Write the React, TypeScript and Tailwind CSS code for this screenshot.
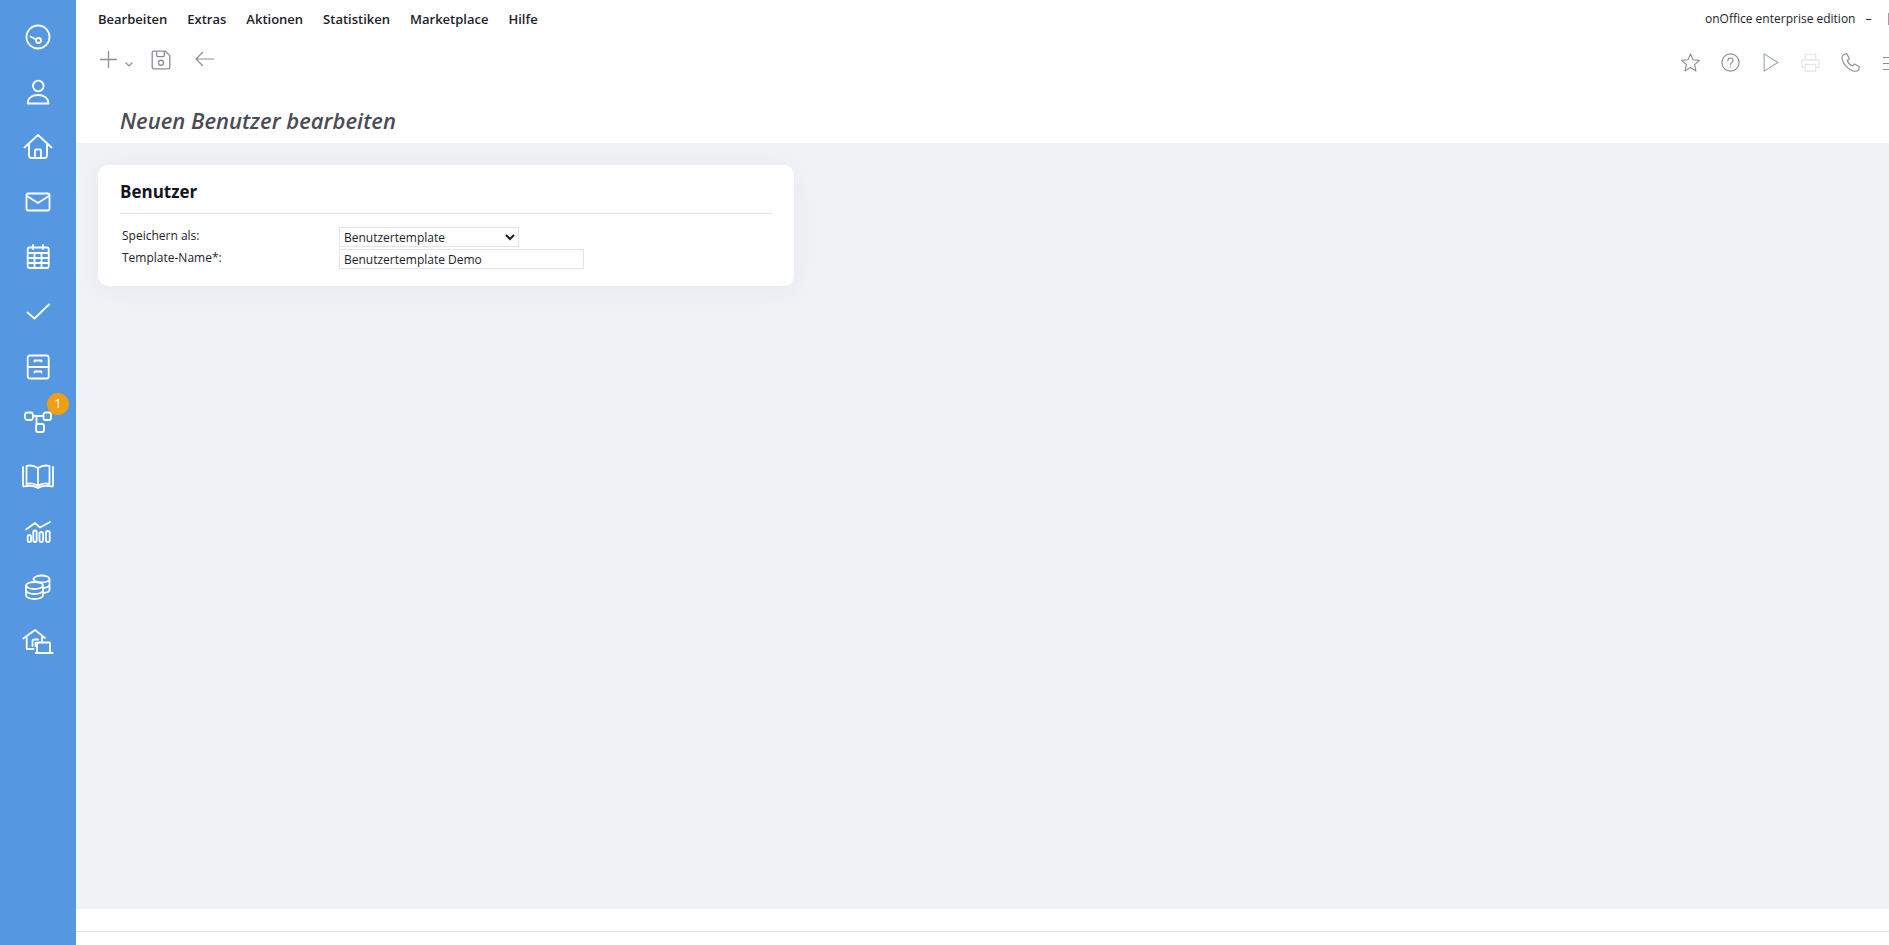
import React from "react";

const MENU = ["Bearbeiten", "Extras", "Aktionen", "Statistiken", "Marketplace", "Hilfe"];

type IconProps = { className?: string; strokeWidth?: number };

function Svg({ className, strokeWidth = 1.5, children }: IconProps & { children: React.ReactNode }) {
  return (
    <svg
      viewBox="0 0 28 28"
      fill="none"
      stroke="currentColor"
      strokeWidth={strokeWidth}
      strokeLinecap="round"
      strokeLinejoin="round"
      className={className}
    >
      {children}
    </svg>
  );
}

const sideIcons: React.ReactNode[] = [
  <>
    <circle cx="14" cy="14" r="11.500" />
    <circle cx="14.500" cy="17.500" r="2.500" />
    <path d="M12.200 16.500 L6.500 13.500" />
  </>,
  <>
    <circle cx="14.300" cy="8" r="5.300" />
    <path d="M3.700 25.500 C3.700 20 8 17 14 17 C20 17 24.500 20 24.500 25.500 Z" />
  </>,
  <>
    <path d="M0.500 14.500 L14 2 L27.500 14.500" />
    <path d="M5 11.500 V22.500 Q5 25 7.500 25 H20.500 Q23 25 23 22.500 V11.500" />
    <path d="M11 25 V17.500 Q11 16.500 12 16.500 H16 Q17 16.500 17 17.500 V25" />
  </>,
  <>
    <rect x="2.500" y="5.500" width="23" height="17" rx="1.500" />
    <path d="M3 8 L14 15 L25 8" />
  </>,
  <>
    <rect x="3.700" y="4.500" width="21" height="20.500" rx="1.500" />
    <path d="M9 2 V6 M19 2 V6 M3.700 10 H24.700 M3.700 15 H24.700 M3.700 20 H24.700 M10.500 10 V25 M17.500 10 V25" />
  </>,
  <path d="M3.500 14.500 L10.500 20.500 L25 6.500" />,
  <>
    <rect x="3.700" y="2.500" width="21" height="23" rx="2" />
    <path d="M3.700 14 H24.700 M10.500 8.500 V7.500 H17.500 V8.500 M10.500 19.500 V18.500 H17.500 V19.500" />
  </>,
  <>
    <rect x="1" y="4.500" width="8" height="7.500" rx="2.500" />
    <rect x="19.500" y="4.500" width="7.500" height="7.500" rx="2" />
    <rect x="12" y="16" width="8" height="8" rx="2" />
    <path d="M9 8 H19.500 M12.500 8 V16" />
  </>,
  <>
    <path d="M14 5 C10 2.500 6 2 2.500 3 V21 C6 20 10 20 14 23 C18 20 22 20 25.500 21 V3 C22 2 18 2.500 14 5 Z M14 5 V23" />
    <path d="M-1 4 V22.500 Q-1 23.500 0 23.500 C6 22 10 22.500 14 25 C18 22.500 22 22 28 23.500 Q29 23.500 29 22.500 V4" />
  </>,
  <>
    <path d="M2 11.500 L11 5 L16 9.500 L26 4" />
    <rect x="3.700" y="17" width="3.300" height="7" rx="1.600" />
    <rect x="9.300" y="12.500" width="3.400" height="11.500" rx="1.700" />
    <rect x="15.500" y="14" width="3.600" height="10" rx="1.800" />
    <rect x="22" y="13" width="3.700" height="11" rx="1.800" />
  </>,
  <>
    <ellipse cx="10.500" cy="12.500" rx="8.500" ry="3.500" />
    <path d="M2 12.500 V22.500 C2 24.500 6 26 10.500 26 C15 26 19 24.500 19 22.500 V12.500 M2 17.500 C2 19.500 6 21 10.500 21 C15 21 19 19.500 19 17.500" />
    <path d="M9.500 6 C9.500 4 13.500 2.500 17.500 2.500 C22 2.500 25.500 4 25.500 6 V17 C25.500 18.500 23 19.500 19.500 20 M25.500 11.500 C25.500 13 23 14.500 19.500 15 M9.500 6 C9.500 8 13.500 9.500 17.500 9.500 C22 9.500 25.500 8 25.500 6" />
  </>,
  <>
    <path d="M-0.700 10.500 L11 2 L21 10" />
    <path d="M2.700 9 V21 H9.500 M18 8 V13" />
    <path d="M8.500 18 V13.500 Q8.500 11.500 10.500 11.500 H14 M14 15 H11.500 V18" />
    <path d="M13 24.500 V15 Q13 14.500 13.500 14.500 H25.500 Q26 14.500 26 15 V24.500" />
    <path d="M11.700 25 H28.700" />
  </>,
];

const topIcons: React.ReactNode[] = [
  <path key="star" d="M14 2.500 L17.300 10.300 L25.800 11.100 L19.400 16.800 L21.300 25.300 L14 20.800 L6.700 25.300 L8.600 16.800 L2.200 11.100 L10.700 10.300 Z" />,
  <g key="help">
    <circle cx="14" cy="14" r="11.500" />
    <path d="M10.500 11.500 C10.500 9.200 12.200 8 14 8 C16 8 17.500 9.400 17.500 11.200 C17.500 13.800 14 13.800 14 16.800 M14 19.700 V20" />
  </g>,
  <path key="play" d="M5.500 2.500 L24 14 L5.500 25.500 Z" />,
  <g key="print">
    <path d="M7 10.500 V3 H21 V10.500 M7 20.500 H2.500 V12 Q2.500 10.500 4 10.500 H24 Q25.500 10.500 25.500 12 V20.500 H21" />
    <rect x="7" y="16.500" width="14" height="9" />
  </g>,
  <path key="phone" d="M4.500 3.500 L9 2 L12.500 9 L9.800 11.300 C10.800 14.800 13.500 17.500 17 18.500 L19.200 16 L26 19.800 L24.500 24.200 C23 26 20 26 17 25 C11 23 5 17 3.200 11 C2.500 8 2.500 5 4.500 3.500 Z" />,
];

export default function App() {
  return (
    <div
      className="flex h-[945px] w-full overflow-hidden bg-white text-[#1d1d2b]"
      style={{ fontFamily: '"Open Sans", sans-serif' }}
    >
      <aside className="flex w-[76px] shrink-0 flex-col items-center bg-[#5697e2] pt-[23px] text-white">
        {sideIcons.map((icon, i) => (
          <div key={i} className="relative flex h-[55px] w-full shrink-0 items-start justify-center">
            <Svg className="h-7 w-7 overflow-visible" strokeWidth={1.8}>
              {icon}
            </Svg>
            {i === 7 && (
              <span className="absolute left-[47px] top-[-15px] flex h-[22px] w-[22px] items-center justify-center rounded-full bg-[#ee9f16] text-[12px] text-white">
                1
              </span>
            )}
          </div>
        ))}
      </aside>

      <main className="flex min-w-0 flex-1 flex-col">
        <header className="h-[143px] shrink-0">
          <div className="flex h-[38px] items-center justify-between pl-[22px]">
            <nav className="flex gap-5 text-[13px] font-semibold leading-none">
              {MENU.map((m) => (
                <span key={m}>{m}</span>
              ))}
            </nav>
            <div className="flex w-[184px] shrink-0 items-center text-[12px] leading-none">
              <span className="whitespace-nowrap">onOffice enterprise edition</span>
              <span className="ml-[10px]">–</span>
              <span className="ml-auto h-[12px] w-px bg-[#b98fb0]" />
            </div>
          </div>

          <div className="flex h-[69px] items-start justify-between pl-[22px] pt-[11px] text-[#8d8d99]">
            <div className="flex items-start">
              <svg viewBox="0 0 20 20" className="h-[21px] w-[21px]" fill="none" stroke="currentColor" strokeWidth="1.200">
                <path d="M10 2 V18 M2 10 H18" />
              </svg>
              <svg viewBox="0 0 10 10" className="ml-[5px] mt-[10px] h-[10px] w-[10px]" fill="none" stroke="currentColor" strokeWidth="1.200">
                <path d="M1.500 3.500 L5 7 L8.500 3.500" />
              </svg>
              <svg viewBox="0 0 20 20" className="ml-[16px] h-[22px] w-[22px]" fill="none" stroke="currentColor" strokeWidth="1.200" strokeLinejoin="round">
                <path d="M2 3.500 Q2 2 3.500 2 H14 L18 6 V16.500 Q18 18 16.500 18 H3.500 Q2 18 2 16.500 Z" />
                <path d="M6 2 V6 Q6 7 7 7 H12 Q13 7 13 6 V2" />
                <circle cx="10" cy="12.500" r="2.300" />
              </svg>
              <svg viewBox="0 0 20 20" className="ml-[23px] h-5 w-5" fill="none" stroke="currentColor" strokeWidth="1.200">
                <path d="M1 10 H19 M8 3 L1 10 L8 17" />
              </svg>
            </div>
            <div className="flex w-[209px] shrink-0 items-start gap-[19px] pt-[3px]">
              {topIcons.map((icon, i) => (
                <Svg
                  key={i}
                  className={
                    i === 3
                      ? "h-[21px] w-[21px] shrink-0 text-[#dfe5ea]"
                      : i === 2
                        ? "h-[21px] w-[21px] shrink-0 text-[#9aa8b0]"
                        : "h-[21px] w-[21px] shrink-0"
                  }
                >
                  {icon}
                </Svg>
              ))}
              <div className="ml-[3px] flex shrink-0 flex-col gap-[5px] pt-[5px]">
                <span className="h-px w-4 bg-[#8d8d99]" />
                <span className="h-px w-4 bg-[#8d8d99]" />
                <span className="h-px w-4 bg-[#8d8d99]" />
              </div>
            </div>
          </div>

          <h1 className="pl-[44px] text-[22px] font-semibold italic leading-[27px] text-[#4b4b55]">
            Neuen Benutzer bearbeiten
          </h1>
        </header>

        <section className="flex-1 bg-[#f0f3f6] pl-[22px] pt-[22px]">
          <div className="h-[121px] w-[696px] rounded-[10px] bg-white px-[22px] pt-[16px] shadow-[0_4px_24px_rgba(215,220,230,0.4)]">
            <h2 className="border-b border-[#e4e4e8] pb-[10px] text-[17px] font-bold leading-[22px] text-[#15151f]">
              Benutzer
            </h2>
            <div className="mt-[13px] flex flex-col gap-[2px] text-[12px] leading-none">
              <div className="flex h-5 items-start">
                <label className="w-[219px] pl-[2px] pt-[3px]">Speichern als:</label>
                <select
                  defaultValue="Benutzertemplate"
                  className="h-5 w-[180px] border border-[#e4e4e8] bg-white text-[12px] outline-none"
                  style={{ appearance: "auto" }}
                >
                  <option>Benutzertemplate</option>
                </select>
              </div>
              <div className="flex h-5 items-start">
                <label className="w-[219px] pl-[2px] pt-[3px]">Template-Name*:</label>
                <input
                  readOnly
                  value="Benutzertemplate Demo"
                  className="h-5 w-[245px] border border-[#e4e4e8] bg-white px-[4px] text-[12px] outline-none"
                />
              </div>
            </div>
          </div>
        </section>

        <footer className="h-[36px] shrink-0 pt-[22px]">
          <div className="border-t border-[#e4e4ea]" />
        </footer>
      </main>
    </div>
  );
}
